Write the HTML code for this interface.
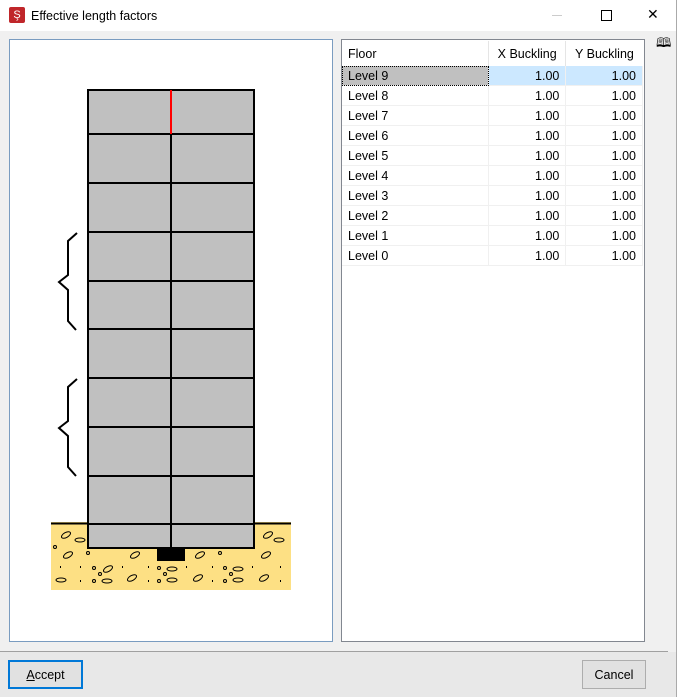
<!DOCTYPE html><html><head><style>
body{margin:0;width:677px;height:697px;background:#f0f0f0;font-family:"Liberation Sans",sans-serif;font-size:12px;position:relative;overflow:hidden}
.abs{position:absolute}
#title{left:0;top:0;width:677px;height:31px;background:#fff}
table{border-collapse:collapse;position:absolute;left:342px;top:41px;width:301px}
td{height:19px;padding:0 6px;border-right:1px solid #f0f0f0;border-bottom:1px solid #f0f0f0;color:#000;font-size:12.5px}
td.n{text-align:right}
th{height:25px;font-weight:normal;text-align:left;padding:0 6px;font-size:12.5px;border-right:1px solid #e5e5e5}
.btn{position:absolute;height:27px;background:#e1e1e1;border:1px solid #adadad;text-align:center;line-height:27px;font-size:12.5px}
</style></head><body>
<div id="title" class="abs"></div>
<div class="abs" style="left:9px;top:7px;width:16px;height:16px;background:#c0262a;border-radius:2px;color:#fff;font-size:11px;line-height:16px;text-align:center">Ş</div>
<div class="abs" style="left:31px;top:9px;font-size:12.5px">Effective length factors</div>
<div class="abs" style="left:552px;top:15px;width:10px;height:1px;background:#ccc"></div>
<div class="abs" style="left:601px;top:10px;width:9px;height:9px;border:1px solid #000"></div>
<div class="abs" style="left:647px;top:6px;font-size:14px">✕</div>
<div class="abs" style="left:676px;top:0;width:1px;height:697px;background:#aaa"></div>
<div class="abs" style="left:9px;top:39px;width:322px;height:601px;background:#fff;border:1px solid #7a9cc0"></div>
<svg class="abs" style="left:0;top:0" width="340" height="640">
<rect x="51" y="522" width="240" height="68" fill="#fde084"/>
<line x1="51" y1="523.5" x2="291" y2="523.5" stroke="#000" stroke-width="2"/>
<g fill="none" stroke="#000" stroke-width="1">
<ellipse cx="66" cy="535" rx="5" ry="2.5" transform="rotate(-30 66 535)"/><ellipse cx="80" cy="540" rx="5" ry="2"/><ellipse cx="68" cy="555" rx="5" ry="2.5" transform="rotate(-30 68 555)"/><ellipse cx="108" cy="569" rx="5" ry="2.5" transform="rotate(-30 108 569)"/><ellipse cx="107" cy="581" rx="5" ry="2"/><ellipse cx="61" cy="580" rx="5" ry="2"/><ellipse cx="132" cy="578" rx="5" ry="2.5" transform="rotate(-30 132 578)"/><ellipse cx="135" cy="555" rx="5" ry="2.5" transform="rotate(-30 135 555)"/><ellipse cx="172" cy="569" rx="5" ry="2"/><ellipse cx="172" cy="580" rx="5" ry="2"/><ellipse cx="200" cy="555" rx="5" ry="2.5" transform="rotate(-30 200 555)"/><ellipse cx="198" cy="578" rx="5" ry="2.5" transform="rotate(-30 198 578)"/><ellipse cx="238" cy="569" rx="5" ry="2"/><ellipse cx="238" cy="580" rx="5" ry="2"/><ellipse cx="264" cy="578" rx="5" ry="2.5" transform="rotate(-30 264 578)"/><ellipse cx="266" cy="555" rx="5" ry="2.5" transform="rotate(-30 266 555)"/><ellipse cx="268" cy="535" rx="5" ry="2.5" transform="rotate(-30 268 535)"/><ellipse cx="279" cy="540" rx="5" ry="2"/>
<circle cx="55" cy="547" r="1.5"/><circle cx="94" cy="568" r="1.5"/><circle cx="94" cy="581" r="1.5"/><circle cx="100" cy="574" r="1.5"/><circle cx="159" cy="568" r="1.5"/><circle cx="159" cy="581" r="1.5"/><circle cx="165" cy="574" r="1.5"/><circle cx="225" cy="568" r="1.5"/><circle cx="225" cy="581" r="1.5"/><circle cx="231" cy="574" r="1.5"/><circle cx="88" cy="553" r="1.5"/><circle cx="220" cy="553" r="1.5"/>
</g>
<g fill="#000"><rect x="60" y="566" width="1" height="2"/><rect x="80" y="566" width="1" height="2"/><rect x="122" y="566" width="1" height="2"/><rect x="148" y="566" width="1" height="2"/><rect x="186" y="566" width="1" height="2"/><rect x="212" y="566" width="1" height="2"/><rect x="252" y="566" width="1" height="2"/><rect x="280" y="566" width="1" height="2"/><rect x="80" y="580" width="1" height="2"/><rect x="148" y="580" width="1" height="2"/><rect x="212" y="580" width="1" height="2"/><rect x="280" y="580" width="1" height="2"/></g>
<rect x="88" y="90" width="166" height="458" fill="#c0c0c0" stroke="#000" stroke-width="2"/>
<g stroke="#000" stroke-width="2"><line x1="88" y1="134" x2="254" y2="134"/><line x1="88" y1="183" x2="254" y2="183"/><line x1="88" y1="232" x2="254" y2="232"/><line x1="88" y1="281" x2="254" y2="281"/><line x1="88" y1="329" x2="254" y2="329"/><line x1="88" y1="378" x2="254" y2="378"/><line x1="88" y1="427" x2="254" y2="427"/><line x1="88" y1="476" x2="254" y2="476"/><line x1="88" y1="524" x2="254" y2="524"/><line x1="171" y1="134" x2="171" y2="548"/></g>
<line x1="171" y1="90" x2="171" y2="134" stroke="#f00" stroke-width="2"/>
<rect x="157" y="548" width="28" height="13" fill="#000"/>
<g fill="none" stroke="#000" stroke-width="2"><polyline points="77,233 68,241 68,275 59,282 68,290 68,321 76,330"/><polyline points="77,379 68,387 68,421 59,428 68,436 68,467 76,476"/></g>
</svg>
<div class="abs" style="left:341px;top:39px;width:302px;height:601px;background:#fff;border:1px solid #828790"></div>
<table>
<tr><th>Floor</th><th style="text-align:center">X Buckling</th><th style="text-align:center;border-right:0">Y Buckling</th></tr>
<tr><td style="background:#c0c0c0;outline:1px dotted #000;outline-offset:-1px;width:134px">Level 9</td><td class="n" style="background:#cce8ff">1.00</td><td class="n" style="background:#cce8ff">1.00</td></tr>
<tr><td>Level 8</td><td class="n">1.00</td><td class="n">1.00</td></tr>
<tr><td>Level 7</td><td class="n">1.00</td><td class="n">1.00</td></tr>
<tr><td>Level 6</td><td class="n">1.00</td><td class="n">1.00</td></tr>
<tr><td>Level 5</td><td class="n">1.00</td><td class="n">1.00</td></tr>
<tr><td>Level 4</td><td class="n">1.00</td><td class="n">1.00</td></tr>
<tr><td>Level 3</td><td class="n">1.00</td><td class="n">1.00</td></tr>
<tr><td>Level 2</td><td class="n">1.00</td><td class="n">1.00</td></tr>
<tr><td>Level 1</td><td class="n">1.00</td><td class="n">1.00</td></tr>
<tr><td>Level 0</td><td class="n">1.00</td><td class="n">1.00</td></tr>
</table>
<div class="abs" style="left:656px;top:34px;font-size:13px">🕮</div>
<div class="abs" style="left:0;top:651px;width:668px;height:1px;background:#a0a0a0"></div>
<div class="abs" style="left:0;top:652px;width:676px;height:45px;background:#e8e8e8"></div>
<div class="btn" style="left:8px;top:660px;width:71px;border:2px solid #0078d7;height:25px;line-height:27px"><u>A</u>ccept</div>
<div class="btn" style="left:582px;top:660px;width:62px;line-height:29px">Cancel</div>
</body></html>
